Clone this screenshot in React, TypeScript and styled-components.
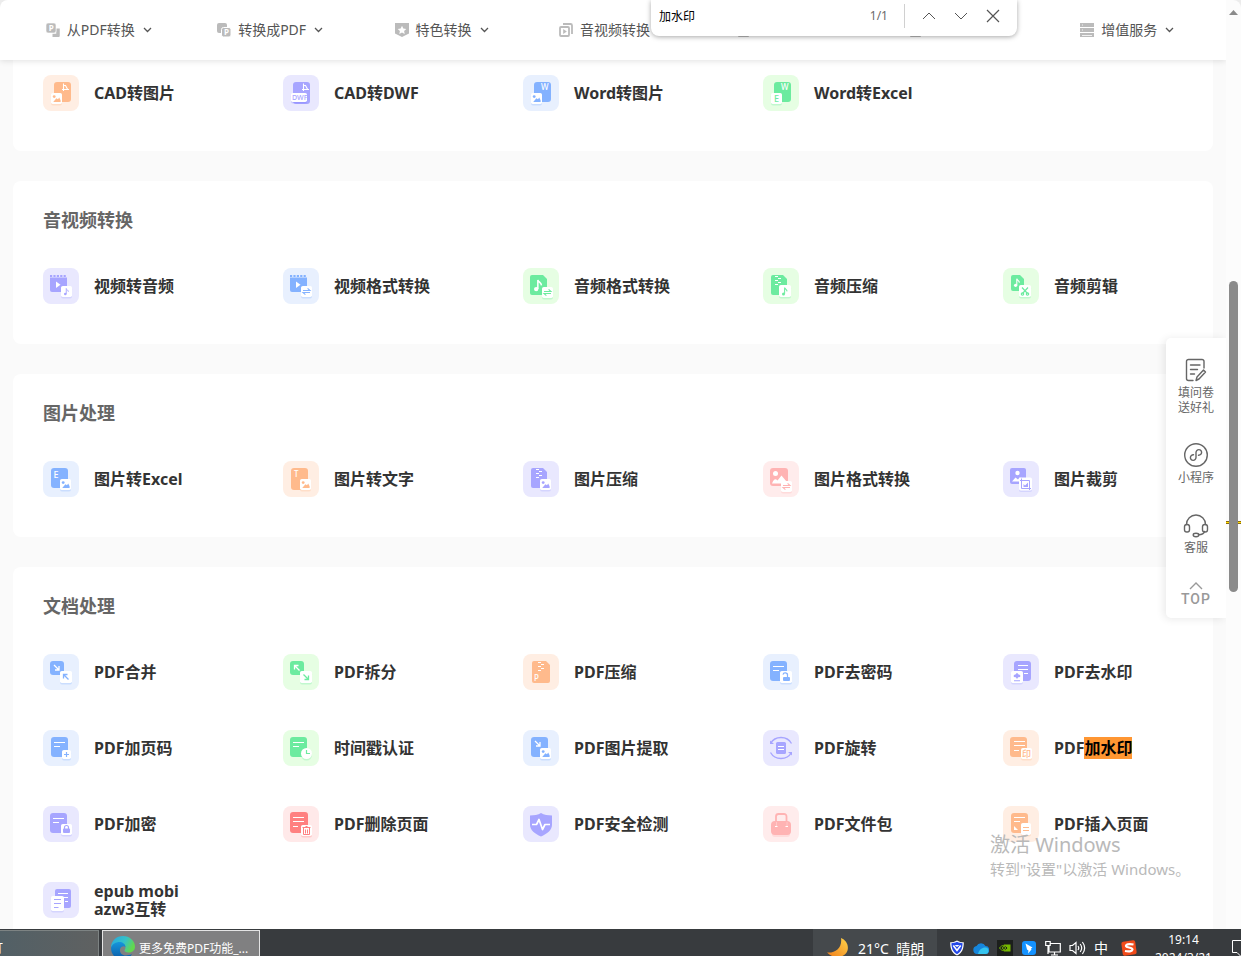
import React from "react";
import styled, { createGlobalStyle } from "styled-components";

const FONT = `"Noto Sans", "Noto Sans CJK SC", sans-serif`;

const GlobalStyle = createGlobalStyle`
  * { box-sizing: border-box; }
  body { margin: 0; background: #ececec; font-family: ${FONT}; }
  button, input { font-family: inherit; margin: 0; }
`;

/* ---------- palette ---------- */

const tones = {
  purple: { bg: "#e9e8fe", fg: "#a7a5ff" },
  blue: { bg: "#e8f0fe", fg: "#84b2ff" },
  green: { bg: "#e6fee3", fg: "#6ceb9f" },
  orange: { bg: "#ffeee3", fg: "#ffba8c" },
  pink: { bg: "#ffecec", fg: "#ffb3b3" },
  red: { bg: "#ffe9e9", fg: "#ff8080" },
};
type Tone = keyof typeof tones;

/* ---------- frame ---------- */

const Screen = styled.div`
  display: grid;
  grid-template-rows: minmax(0, 1fr) 27px;
  height: 100vh;
  overflow: hidden;
`;

const Browser = styled.div`
  position: relative;
  display: grid;
  grid-template-columns: minmax(0, 1fr) 15px;
  min-height: 0;
  border-radius: 8px 8px 0 0;
  overflow: hidden;
`;

const Page = styled.div`
  display: flex;
  flex-direction: column;
  min-height: 0;
  overflow: hidden;
  background: #fafafa;
`;

const Header = styled.header`
  position: relative;
  z-index: 2;
  flex: none;
  height: 60px;
  padding: 0 13px;
  background: #fff;
  box-shadow: 0 1px 6px rgba(0, 0, 0, 0.12);
`;

const Nav = styled.nav`
  display: flex;
  height: 100%;
`;

const NavItem = styled.button`
  flex: 1;
  display: flex;
  align-items: center;
  justify-content: center;
  padding: 0;
  border: 0;
  background: none;
  color: #555;
  font-size: 14px;
  line-height: 20px;
  white-space: nowrap;
`;

const NavLabel = styled.span`
  min-width: 56px;
  margin: 0 8px 0 7px;
`;

const Main = styled.main`
  flex: 1;
  min-height: 0;
  padding: 0 13px;
  overflow: hidden;
`;

const Card = styled.section<{ $clipped?: boolean }>`
  margin-bottom: 30px;
  padding-top: ${(p) => (p.$clipped ? 15 : 27)}px;
  background: #fff;
  border-radius: ${(p) => (p.$clipped ? "0 0 8px 8px" : "8px")};
`;

const CardTitle = styled.h2`
  margin: 0 30px 36px;
  color: #666;
  font-size: 18px;
  font-weight: 700;
  line-height: 24px;
`;

const ToolGrid = styled.div`
  display: grid;
  grid-template-columns: repeat(5, minmax(0, 1fr));
`;

const Tool = styled.a`
  display: flex;
  align-items: center;
  height: 36px;
  margin-bottom: 40px;
  padding-left: 30px;
  color: #333;
  font-size: 16px;
  font-weight: 700;
  line-height: 18px;
  text-decoration: none;
`;

const ToolLabel = styled.span`
  max-width: 120px;
  margin-left: 15px;
`;

const Hit = styled.mark`
  background: #ff9632;
  color: #000;
`;

const IconTile = styled.svg`
  flex: none;
  width: 36px;
  height: 36px;
  border-radius: 8px;
`;

/* ---------- find bar ---------- */

const FindBar = styled.form`
  position: absolute;
  z-index: 4;
  top: 0;
  right: 224px;
  display: flex;
  align-items: center;
  width: 366px;
  height: 36px;
  padding: 0 8px 4px;
  background: #fff;
  border-radius: 0 0 8px 8px;
  box-shadow: 0 1px 5px rgba(0, 0, 0, 0.35);
`;

const FindInput = styled.input`
  flex: 1;
  min-width: 0;
  padding: 0;
  border: 0;
  outline: 0;
  background: none;
  color: #000;
  font-size: 12px;
`;

const FindCount = styled.span`
  padding-right: 16px;
  border-right: 1px solid #d0d0d0;
  color: #6b6b6b;
  font-size: 12px;
  line-height: 24px;
`;

const FindButton = styled.button`
  display: grid;
  place-items: center;
  width: 32px;
  height: 24px;
  padding: 0;
  border: 0;
  background: none;
  color: #555;
`;

const FindActions = styled.div`
  display: flex;
  margin-left: 8px;
`;

/* ---------- scrollbar ---------- */

const ScrollTrack = styled.div`
  position: relative;
  background: #fcfcfc;
`;

const ScrollArrow = styled.svg`
  position: absolute;
  top: 10px;
  left: 3px;
  width: 9px;
  height: 5px;
`;

const ScrollThumb = styled.div`
  position: absolute;
  top: 281px;
  left: 3px;
  width: 9px;
  height: 311px;
  border-radius: 5px;
  background: #8b8b8b;
`;

const MatchTick = styled.div`
  position: absolute;
  top: 521px;
  left: 0;
  right: 0;
  height: 3px;
  border: solid #8a6a10;
  border-width: 1px 0;
  background: #ffdd00;
`;

/* ---------- floating panel ---------- */

const SidePanel = styled.aside`
  position: absolute;
  z-index: 3;
  top: 338px;
  right: 15px;
  display: flex;
  flex-direction: column;
  align-items: center;
  width: 60px;
  height: 280px;
  padding-top: 20px;
  background: #fff;
  border-radius: 5px 0 0 5px;
  box-shadow: -2px 1px 8px rgba(0, 0, 0, 0.09);
  clip-path: inset(-12px 0 -12px -12px);
`;

const SideButton = styled.button`
  display: flex;
  flex-direction: column;
  align-items: center;
  margin-bottom: 27px;
  padding: 0;
  border: 0;
  background: none;
  color: #666;
  font-size: 12px;
  line-height: 15px;
  white-space: pre-line;

  & svg { margin-bottom: 2px; }
`;

const TopButton = styled(SideButton)`
  margin: 0;
  color: #999;
  font-family: Roboto, sans-serif;
  font-size: 14px;
  font-weight: 500;
  letter-spacing: 1px;
`;

/* ---------- activation notice ---------- */

const Activation = styled.div`
  position: absolute;
  z-index: 5;
  right: 49px;
  bottom: 49px;
  width: 202px;
  color: #b9b9b9;
  font-size: 15px;
  line-height: 22px;
  white-space: nowrap;
  pointer-events: none;
`;

const ActivationTitle = styled.div`
  font-size: 20px;
  line-height: 26px;
`;

/* ---------- taskbar ---------- */

const Taskbar = styled.footer`
  display: flex;
  height: 27px;
  overflow: hidden;
  background: #383b3e;
  color: #fff;
`;

const TaskButton = styled.button<{ $active?: boolean }>`
  display: flex;
  align-items: center;
  flex: none;
  width: ${(p) => (p.$active ? 158 : 99)}px;
  height: 40px;
  margin: 1px 3px 0 0;
  padding: ${(p) => (p.$active ? "0 8px 4px" : "0 0 4px")};
  border: 1px solid ${(p) => (p.$active ? "#e4e4e4" : "#7d8383")};
  border-left-width: ${(p) => (p.$active ? 1 : 0)}px;
  background: ${(p) => (p.$active ? "#808081" : "linear-gradient(90deg, #526066, #5f6161)")};
  color: #fff;
  font-size: 12px;
  white-space: nowrap;

  & svg { flex: none; margin-right: 4px; }
`;

const TaskLabelEnd = styled.span`
  display: flex;
  justify-content: flex-end;
  width: 3px;
  overflow: hidden;
`;

const Weather = styled.button`
  display: flex;
  align-items: center;
  flex: none;
  width: 124px;
  height: 38px;
  margin-left: auto;
  padding: 0 0 0 13px;
  border: 0;
  background: #45494c;
  color: #fff;
  font-size: 14px;
  white-space: pre;

  & svg { margin-right: 8px; }
`;

const Tray = styled.div`
  display: flex;
  align-items: center;
  flex: none;
  gap: 8px;
  width: 211px;
  height: 38px;
  padding-left: 12px;
`;

const InputMode = styled.span`
  width: 14px;
  font-size: 14px;
  line-height: 16px;
`;

const Clock = styled.time`
  flex: none;
  width: 71px;
  font-size: 12px;
  line-height: 18px;
  text-align: center;
  padding-top: 2px;
`;

const Notice = styled.svg`
  flex: none;
  margin: 11px 0 0 13px;
`;

/* ---------- tool icon parts ---------- */

const Shape = ({ x, y, w, h, r = 3, fill }: { x: number; y: number; w: number; h: number; r?: number; fill: string }) => (
  <rect x={x} y={y} width={w} height={h} rx={r} fill={fill} />
);

const Badge = ({ x, y, w = 11, h = 11, c }: { x: number; y: number; w?: number; h?: number; c: string }) => (
  <>
    <rect x={x} y={y + 1.5} width={w} height={h} rx="2" fill={c} opacity="0.3" />
    <rect x={x} y={y} width={w} height={h} rx="1.8" fill="#fff" />
  </>
);

const PhotoBadge = ({ x, y, c }: { x: number; y: number; c: string }) => (
  <>
    <Badge x={x} y={y} c={c} />
    <circle cx={x + 3.2} cy={y + 3.6} r="1.4" fill={c} />
    <path d={`M${x + 2.2} ${y + 9} l3.2-3.8 1.6 1 1.2-1.8 1.4 2.8 v1.8z`} fill={c} />
  </>
);

const Glyph = ({ x, y, s = 8, c = "#fff", children }: { x: number; y: number; s?: number; c?: string; children: string }) => (
  <text x={x} y={y} fontSize={s} fill={c} fontFamily={FONT} fontWeight="500">{children}</text>
);

const CadMark = () => (
  <path d="M20.500 8.500V16M19 14.500h7M20.500 10.500h2l2.200 4" stroke="#fff" strokeWidth="1.100" fill="none" />
);

const Lines = ({ x, y, n = 2, c = "#fff" }: { x: number; y: number; n?: number; c?: string }) => (
  <path
    d={`M${x} ${y}h11M${x} ${y + 4}h${n === 3 ? 11 : 6}${n === 3 ? `M${x} ${y + 9}h5` : ""}`}
    stroke={c}
    strokeWidth="1.2"
    fill="none"
  />
);

const Zipper = ({ x, y }: { x: number; y: number }) => (
  <path d={`M${x} ${y + 1.5}h3M${x + 3} ${y + 3.5}h3M${x} ${y + 5.5}h3M${x + 3} ${y + 7.5}h3M${x} ${y + 9.5}h3`} stroke="#fff" strokeWidth="1.1" fill="none" />
);

const Note = ({ x, y, s = 1, c = "#fff" }: { x: number; y: number; s?: number; c?: string }) => (
  <g transform={`translate(${x} ${y}) scale(${s})`}>
    <circle cx="2" cy="9.2" r="2" fill={c} />
    <path d="M3.5 9V.8C4 3 6.5 3 6.8 5.8" stroke={c} strokeWidth="1.4" fill="none" />
  </g>
);

const Swap = ({ x, y, c }: { x: number; y: number; c: string }) => (
  <path d={`M${x + 2} ${y + 4.5}h7l-2.4-2.2M${x + 9} ${y + 6.5}h-7l2.4 2.2`} stroke={c} strokeWidth="1.1" fill="none" />
);

const Arrow = ({ x, y, c, up }: { x: number; y: number; c: string; up?: boolean }) => (
  <path
    d={up ? `M${x + 5.5} ${y + 5.5}L${x + 1} ${y + 1}M${x + 0.5} ${y + 4.5}v-4h4` : `M${x} ${y}l4.5 4.5M${x + 5} ${y + 1}v4h-4`}
    stroke={c}
    strokeWidth="1.3"
    fill="none"
  />
);

const CutPage = ({ x, w, h, c }: { x: number; w: number; h: number; c: string }) => (
  <path d={`M${x + 2} 7h${w - 6}l4 4v${h - 6}a2 2 0 0 1-2 2h${-(w - 4)}a2 2 0 0 1-2-2V9a2 2 0 0 1 2-2z`} fill={c} />
);

const Film = ({ c }: { c: string }) => (
  <>
    <path d="M7 9.500h17v12.500a2 2 0 0 1-2 2H9a2 2 0 0 1-2-2z" fill={c} />
    <path d="M7 8h17" stroke={c} strokeWidth="2" strokeDasharray="2.200 1.200" />
    <path d="M13 13.500v6.500l4.500-3.250z" fill="#fff" />
  </>
);

type Draw = (c: string) => React.ReactNode;

const art: Record<string, Draw> = {
  cadPhoto: (c) => <><Shape x={11} y={7} w={17} h={20} fill={c} /><CadMark /><PhotoBadge x={8} y={18} c={c} /></>,
  cadDwf: (c) => (
    <><Shape x={10} y={7} w={17} h={22} fill={c} /><CadMark /><Badge x={8} y={18} w={16} h={9} c="#7774ff" /><Glyph x={9} y={25} s={7} c={c}>DWF</Glyph></>
  ),
  wordPhoto: (c) => <><Shape x={11} y={7} w={17} h={20} fill={c} /><Glyph x={18} y={15}>W</Glyph><PhotoBadge x={8} y={18} c={c} /></>,
  wordExcel: (c) => <><Shape x={11} y={7} w={17} h={20} fill={c} /><Glyph x={18} y={15}>W</Glyph><Badge x={8} y={18} c={c} /><Glyph x={11} y={27} s={9} c={c}>E</Glyph></>,
  videoAudio: (c) => <><Film c={c} /><Badge x={18} y={18} c={c} /><Note x={21} y={20} s={0.65} c={c} /></>,
  videoSwap: (c) => <><Film c={c} /><Badge x={18} y={18} c={c} /><Swap x={18} y={18} c={c} /></>,
  audioSwap: (c) => <><CutPage x={7} w={17} h={20} c={c} /><Note x={11} y={11} s={1.1} /><Badge x={19} y={19} c={c} /><Swap x={19} y={19} c={c} /></>,
  audioZip: (c) => <><CutPage x={8} w={16} h={20} c={c} /><Zipper x={12} y={7} /><Badge x={16} y={17} w={12} h={12} c={c} /><Note x={19} y={19} s={0.75} c={c} /></>,
  audioCut: (c) => (
    <><CutPage x={8} w={13} h={16} c={c} /><Note x={11} y={10} s={0.8} /><Badge x={16} y={17} w={12} h={12} c={c} />
      <g stroke={c} fill="none" strokeWidth="1.2"><path d="M19 19.500l5.500 6M25 19.500l-5.500 6" /><circle cx="19.500" cy="26" r="1.200" /><circle cx="24.500" cy="26" r="1.200" /></g></>
  ),
  photoExcel: (c) => <><Shape x={8} y={7} w={17} h={20} fill={c} /><Glyph x={10.5} y={17} s={9}>E</Glyph><PhotoBadge x={17} y={18} c={c} /></>,
  photoText: (c) => <><Shape x={8} y={7} w={17} h={22} fill={c} /><Glyph x={11} y={16}>T</Glyph><PhotoBadge x={17} y={18} c={c} /></>,
  photoZip: (c) => <><CutPage x={8} w={16} h={20} c={c} /><Zipper x={13} y={7} /><PhotoBadge x={17} y={18} c={c} /></>,
  photoSwap: (c) => (
    <><Shape x={7} y={7} w={18} h={18} fill={c} /><circle cx="12.500" cy="12.500" r="2.500" fill="#fff" /><path d="M9 22.500c2-5 3.500-5 5.500-3l4-5 5 6v2z" fill="#fff" />
      <Badge x={18} y={20} c={c} /><Swap x={18} y={20} c={c} /></>
  ),
  photoCrop: (c) => (
    <><Shape x={7} y={7} w={16} h={16} r={2} fill={c} /><circle cx="14.500" cy="12" r="2.200" fill="#fff" /><path d="M9 20.500l3.500-4 2.500 2 2-2.500 3 4.500z" fill="#fff" />
      <Badge x={16} y={16.500} w={13} h={13} c={c} /><path d="M18.500 17.500v10H28M17 19.500h9.500v9.500" stroke={c} strokeWidth="1" fill="none" /><path d="M20.500 26v-3l1.500 1.500 3-3V26z" fill={c} /></>
  ),
  merge: (c) => <><Shape x={7} y={7} w={14} h={14} fill={c} /><Arrow x={11} y={11} c="#fff" /><Badge x={17} y={17} w={12} h={12} c={c} /><Arrow x={20} y={20} c={c} up /></>,
  split: (c) => <><Shape x={7} y={7} w={14} h={14} fill={c} /><Arrow x={11} y={11} c="#fff" up /><Badge x={17} y={17} w={12} h={12} c={c} /><Arrow x={20.5} y={20.5} c={c} /></>,
  pdfZip: (c) => <><CutPage x={9} w={18} h={22} c={c} /><Zipper x={15} y={7} /><Glyph x={11} y={27} s={8}>P</Glyph></>,
  unlock: (c) => (
    <><Shape x={7} y={7} w={17} h={20} fill={c} /><Lines x={10} y={12.5} /><Badge x={17} y={17} w={12} h={12} c={c} />
      <rect x="20" y="23" width="7" height="4" rx="1" fill={c} /><path d="M24.500 23v-1.500a2.200 2.200 0 0 0-4.500-.8" stroke={c} strokeWidth="1.200" fill="none" /></>
  ),
  unmark: (c) => (
    <><Shape x={11} y={7} w={17} h={20} fill={c} /><path d="M15 11.500h10M15 15.500h10M21 19.500h4" stroke="#fff" strokeWidth="1.200" /><Badge x={8} y={17} w={12} h={12} c={c} />
      <path d="M14 18.800l1.600 1.600 1.600.7v1.800l-2 .4L14 25l-1.200-1.700-2-.4v-1.800l1.600-.7zM11 26.300h6v1h-6z" fill={c} /></>
  ),
  addPage: (c) => <><Shape x={8} y={7} w={17} h={20} fill={c} /><Lines x={11} y={12.5} /><Badge x={19} y={20} w={9} h={9} c={c} /><path d="M23.500 22v5M21 24.500h5" stroke={c} strokeWidth="1.200" /></>,
  clock: (c) => (
    <><Shape x={7} y={7} w={17} h={20} fill={c} /><Lines x={10} y={12.5} /><circle cx="23.500" cy="25" r="5.500" fill={c} opacity=".3" /><circle cx="23.500" cy="23.500" r="5.500" fill="#fff" />
      <path d="M23.500 20v3.500h3.500" stroke={c} strokeWidth="1.200" fill="none" /></>
  ),
  extract: (c) => <><Shape x={8} y={7} w={17} h={20} fill={c} /><Arrow x={12} y={11} c="#fff" /><PhotoBadge x={17} y={18} c={c} /></>,
  rotate: (c) => (
    <><Shape x={13} y={12} w={10} h={12} r={1.5} fill={c} /><path d="M15 16.500h6M15 19.500h6" stroke="#fff" strokeWidth="1.100" />
      <path d="M28.500 13.500C24 5.500 12 5.500 7.500 13.500M7.500 22.500c4.500 8 16.500 8 21 0" stroke={c} strokeWidth="1.300" fill="none" /><path d="M7 10.500v3.500h4zM29 25.500V22h-4z" fill={c} /></>
  ),
  mark: (c) => <><Shape x={7} y={7} w={17} h={20} fill={c} /><Lines x={11} y={11.5} n={3} /><Badge x={18} y={18} c={c} /><Glyph x={19} y={27} s={9} c={c}>印</Glyph></>,
  lock: (c) => (
    <><Shape x={7} y={7} w={17} h={20} fill={c} /><Lines x={10} y={12.5} /><Badge x={18} y={18} c={c} />
      <rect x="20" y="22.500" width="7" height="4.500" rx="1" fill={c} /><path d="M21.500 23v-1.500a2 2 0 0 1 4 0V23" stroke={c} strokeWidth="1.200" fill="none" /></>
  ),
  trash: (c) => (
    <><Shape x={7} y={6} w={18} h={21} fill={c} /><Lines x={10} y={11.5} n={3} /><Badge x={18} y={19} c={c} />
      <path d="M19.500 21.500h8M20.500 21.500v7h6v-7M22.500 23.500v4M24.500 23.500v4M22.500 20.500h2" stroke={c} strokeWidth="1" fill="none" /></>
  ),
  shield: (c) => (
    <><path d="M18 7c3 1.800 7 2.500 11 2.500V19c0 5-5 9-11 11.500C12 28 7 24 7 19V9.500C11 9.500 15 8.800 18 7z" fill={c} />
      <path d="M9 18.500h4.500l2.500-5 3.500 10 2.500-5h5" stroke="#fff" strokeWidth="1.700" fill="none" strokeLinejoin="round" /></>
  ),
  bag: (c) => (
    <><rect x="9" y="17" width="18" height="14" rx="3" fill={c} opacity=".3" /><path d="M13 17v-6.500a2.500 2.500 0 0 1 2.500-2.500h5.500a2.500 2.500 0 0 1 2.500 2.500V17" stroke={c} strokeWidth="1.800" fill="none" /><Shape x={8} y={15} w={20} h={14} r={4} fill={c} />
      <path d="M12 20.500h2.500M22.500 20.500h2.500" stroke="#fff" strokeWidth="1" /><path d="M13.500 16v4M24 16v4" stroke="#fff" strokeWidth=".5" opacity=".6" /></>
  ),
  insert: (c) => (
    <><Shape x={8} y={7} w={17} h={20} fill={c} /><Lines x={11} y={11.5} /><path d="M11 20v4h4z" fill="#fff" /><Badge x={18} y={17} w={10} h={12} c={c} />
      <path d="M20 21.500h6M20 24.500h6" stroke={c} strokeWidth="1.100" /></>
  ),
  epub: (c) => (
    <><Shape x={12} y={7} w={16} h={19} r={2} fill={c} /><path d="M15 11.500h10M15 15.500h10M22 19.500h3" stroke="#fff" strokeWidth="1.200" /><Badge x={8} y={14} w={13} h={15} c={c} />
      <path d="M11 17.500h7M11 21.500h7M11 25.500h4.500" stroke={c} strokeWidth="1.100" /></>
  ),
};

/* ---------- data ---------- */

type ToolSpec = [string, Tone, string, string?];

const sections: { title?: string; tools: ToolSpec[] }[] = [
  {
    tools: [
      ["CAD转图片", "orange", "cadPhoto"],
      ["CAD转DWF", "purple", "cadDwf"],
      ["Word转图片", "blue", "wordPhoto"],
      ["Word转Excel", "green", "wordExcel"],
    ],
  },
  {
    title: "音视频转换",
    tools: [
      ["视频转音频", "purple", "videoAudio"],
      ["视频格式转换", "blue", "videoSwap"],
      ["音频格式转换", "green", "audioSwap"],
      ["音频压缩", "green", "audioZip"],
      ["音频剪辑", "green", "audioCut"],
    ],
  },
  {
    title: "图片处理",
    tools: [
      ["图片转Excel", "blue", "photoExcel"],
      ["图片转文字", "orange", "photoText"],
      ["图片压缩", "purple", "photoZip"],
      ["图片格式转换", "pink", "photoSwap"],
      ["图片裁剪", "purple", "photoCrop"],
    ],
  },
  {
    title: "文档处理",
    tools: [
      ["PDF合并", "blue", "merge"],
      ["PDF拆分", "green", "split"],
      ["PDF压缩", "orange", "pdfZip"],
      ["PDF去密码", "blue", "unlock"],
      ["PDF去水印", "purple", "unmark"],
      ["PDF加页码", "blue", "addPage"],
      ["时间戳认证", "green", "clock"],
      ["PDF图片提取", "blue", "extract"],
      ["PDF旋转", "purple", "rotate"],
      ["PDF", "orange", "mark", "加水印"],
      ["PDF加密", "purple", "lock"],
      ["PDF删除页面", "red", "trash"],
      ["PDF安全检测", "purple", "shield"],
      ["PDF文件包", "pink", "bag"],
      ["PDF插入页面", "orange", "insert"],
      ["epub mobi azw3互转", "purple", "epub"],
    ],
  },
];

const g = "#bbb";
const navIcons: Record<string, React.ReactNode> = {
  from: (
    <><path d="M12 5.500v7H6.500" stroke={g} strokeWidth="3.500" fill="none" strokeLinejoin="round" /><rect width="10" height="10" rx="2" fill={g} stroke="#fff" strokeWidth=".6" />
      <text x="2.700" y="8" fontSize="8" fill="#fff" fontFamily={FONT} fontWeight="700">P</text></>
  ),
  to: (
    <><rect width="10" height="10" rx="2" fill={g} /><rect x="4.500" y="4.500" width="9.500" height="9.500" rx="2" fill={g} stroke="#fff" />
      <text x="7" y="12.300" fontSize="8" fill="#fff" fontFamily={FONT} fontWeight="700">P</text></>
  ),
  star: (
    <><path d="M0 0h14v10.500L7 14 0 10.500z" fill={g} /><path d="M7 2.800l1.300 2.700 3 .4-2.200 2 .6 3L7 9.400l-2.700 1.500.6-3-2.200-2 3-.4z" fill="#fff" /></>
  ),
  media: (
    <><path d="M4 1h7.500a1.500 1.500 0 0 1 1.500 1.500v8.500" stroke={g} strokeWidth="1.800" fill="none" /><rect x="1" y="4" width="9" height="9" rx="1" stroke={g} strokeWidth="1.800" fill="none" /><path d="M4.200 6v5l3.600-2.500z" fill={g} /></>
  ),
  page: <rect x="1" width="11" height="14" rx="1" fill={g} />,
  rows: (
    <><path d="M0 0h14v4H0zM0 5h14v4H0zM0 10h14v4H0z" fill={g} /><path d="M2 2h1M2 7h1M2 12.500h10" stroke="#fff" strokeWidth=".8" /></>
  ),
};

const nav: [string, string][] = [
  ["from", "从PDF转换"],
  ["to", "转换成PDF"],
  ["star", "特色转换"],
  ["media", "音视频转换"],
  ["page", ""],
  ["page", ""],
  ["rows", "增值服务"],
];

export default function App() {
  return (
    <>
      <GlobalStyle />
      <Screen>
        <Browser>
          <Page>
            <Header>
              <Nav>
                {nav.map(([icon, label], i) => (
                  <NavItem key={i} type="button">
                    <svg width="14" height="14" viewBox="0 0 14 14" aria-hidden>{navIcons[icon]}</svg>
                    <NavLabel>{label}</NavLabel>
                    <svg width="9" height="6" viewBox="0 0 9 6" fill="none" stroke="#555" strokeWidth="1.300" aria-hidden><path d="M1 1l3.500 3.500L8 1" /></svg>
                  </NavItem>
                ))}
              </Nav>
            </Header>
            <Main>
              {sections.map((s, i) => (
                <Card key={i} $clipped={!s.title}>
                  {s.title && <CardTitle>{s.title}</CardTitle>}
                  <ToolGrid>
                    {s.tools.map(([label, tone, icon, hit]) => (
                      <Tool key={icon} href="#">
                        <IconTile viewBox="0 0 36 36" aria-hidden>
                          <rect width="36" height="36" fill={tones[tone].bg} />
                          {art[icon](tones[tone].fg)}
                        </IconTile>
                        <ToolLabel>{label}{hit && <Hit>{hit}</Hit>}</ToolLabel>
                      </Tool>
                    ))}
                  </ToolGrid>
                </Card>
              ))}
            </Main>
          </Page>
          <ScrollTrack>
            <ScrollArrow viewBox="0 0 9 5"><path d="M4.500 0L9 5H0z" fill="#8b8b8b" /></ScrollArrow>
            <MatchTick />
            <ScrollThumb />
          </ScrollTrack>

          <FindBar>
            <FindInput aria-label="查找" defaultValue="加水印" />
            <FindCount>1/1</FindCount>
            <FindActions>
              <FindButton type="button" aria-label="上一个">
                <svg width="14" height="8" viewBox="0 0 14 8" fill="none" stroke="currentColor"><path d="M1 7l6-6 6 6" /></svg>
              </FindButton>
              <FindButton type="button" aria-label="下一个">
                <svg width="14" height="8" viewBox="0 0 14 8" fill="none" stroke="currentColor"><path d="M1 1l6 6 6-6" /></svg>
              </FindButton>
              <FindButton type="button" aria-label="关闭">
                <svg width="14" height="14" viewBox="0 0 14 14" fill="none" stroke="currentColor" strokeWidth="1.200"><path d="M1 1l12 12M13 1L1 13" /></svg>
              </FindButton>
            </FindActions>
          </FindBar>

          <SidePanel>
            <SideButton type="button">
              <svg width="24" height="25" viewBox="0 0 24 25" fill="none" stroke="#666" strokeWidth="1.400" strokeLinecap="round" strokeLinejoin="round">
                <path d="M20 10V3.500a2 2 0 0 0-2-2H4.500a2 2 0 0 0-2 2v17a2 2 0 0 0 2 2H9M6.500 7h9.500M6.500 11.500h7M6.500 16h4M12 22.500l1-3.500 6.500-7 2 2-6.500 7z" />
              </svg>
              {"填问卷\n送好礼"}
            </SideButton>
            <SideButton type="button">
              <svg width="26" height="26" viewBox="0 0 26 26" fill="none" stroke="#666" strokeWidth="1.400" strokeLinecap="round">
                <circle cx="13" cy="13" r="11.300" />
                <path d="M10.500 12.800a2.800 2.800 0 1 0 2.500 2.800v-5.200a2.800 2.800 0 1 1 2.500 2.800" />
              </svg>
              小程序
            </SideButton>
            <SideButton type="button">
              <svg width="26" height="26" viewBox="0 0 26 26" fill="none" stroke="#666" strokeWidth="1.400" strokeLinecap="round">
                <path d="M3.500 12.500a9.500 9.500 0 0 1 19 0M21.500 19.500c-.5 2-3 3.200-6 3.300" />
                <rect x="1.500" y="12.500" width="5" height="7.500" rx="2.300" /><rect x="19.500" y="12.500" width="5" height="7.500" rx="2.300" />
                <ellipse cx="13" cy="23" rx="2.800" ry="1.700" />
              </svg>
              客服
            </SideButton>
            <TopButton type="button">
              <svg width="14" height="8" viewBox="0 0 14 8" fill="none" stroke="#999" strokeWidth="1.400"><path d="M1 7l6-6 6 6" /></svg>
              TOP
            </TopButton>
          </SidePanel>

          <Activation>
            <ActivationTitle>激活 Windows</ActivationTitle>
            转到"设置"以激活 Windows。
          </Activation>
        </Browser>

        <Taskbar>
          <TaskButton type="button"><TaskLabelEnd>打</TaskLabelEnd></TaskButton>
          <TaskButton type="button" $active>
            <svg width="24" height="24" viewBox="0 0 24 24" aria-hidden>
              <defs>
                <linearGradient id="edgeTop" x1="0" y1="0" x2="1" y2=".4"><stop offset="0" stopColor="#27a8e0" /><stop offset=".6" stopColor="#35c1c8" /><stop offset="1" stopColor="#62d84e" /></linearGradient>
                <linearGradient id="edgeLow" x1="0" y1="0" x2="0" y2="1"><stop offset="0" stopColor="#1595dc" /><stop offset="1" stopColor="#0c59a4" /></linearGradient>
              </defs>
              <path d="M0 12C0 4.500 5.500 0 12 0s12 5 12 10.500c0 4-3 6-6.500 6-3 0-4-1.200-4-2 0-.8 1-1.200 1-3C14.500 9 12 7 8.500 7 4 7 1 9 0 12z" fill="url(#edgeTop)" />
              <path d="M0 12c1-4 5-6 8.500-6 3 0 6 2 6 5-1-1.500-5-1-5.500 2.500C8.500 18 13 21.500 21 18c-2 4-5.500 6-9 6C5.500 24 0 19 0 12z" fill="url(#edgeLow)" />
            </svg>
            更多免费PDF功能_...
          </TaskButton>

          <Weather type="button">
            <svg width="24" height="24" viewBox="0 0 24 24" aria-hidden>
              <defs><linearGradient id="moon" x1="0" y1="1" x2="1" y2="0"><stop offset="0" stopColor="#f07d1a" /><stop offset="1" stopColor="#ffd34a" /></linearGradient></defs>
              <path d="M15 2c5 2 8 7 6.500 12.500C19.500 21.500 8 24 1 16.500 9 17.500 16.500 12 15 2z" fill="url(#moon)" />
            </svg>
            {"21°C  晴朗"}
          </Weather>
          <Tray>
            <svg width="16" height="16" viewBox="0 0 16 16" aria-hidden><path d="M8 .5c2 1.300 4.500 1.800 6.800 1.800 0 6-1.300 10.700-6.800 13.200C2.500 13 1.200 8.300 1.200 2.300 3.500 2.300 6 1.800 8 .5z" fill="#fff" /><path d="M8 1.800c2 1 3.800 1.400 5.600 1.500-.2 5-1.400 8.700-5.600 10.900-4.200-2.200-5.400-5.900-5.600-10.900C4.200 3.200 6 2.800 8 1.800z" fill="#2448e8" /><path d="M4.300 5.500L8 10.500l3.700-5" fill="none" stroke="#fff" strokeWidth="1.600" /><path d="M5.500 5L8 7l2.500-2z" fill="#fff" /></svg>
            <svg width="16" height="16" viewBox="0 0 16 16" aria-hidden><path d="M4 14a4 4 0 0 1-.5-7.900A5 5 0 0 1 12.500 6 4 4 0 0 1 12 14z" fill="#1686dc" /><path d="M5 14c1-5 5-7 8-6.500A3.300 3.300 0 0 1 12.500 14z" fill="#35c4ee" /></svg>
            <svg width="16" height="16" viewBox="0 0 16 16" aria-hidden><rect width="16" height="16" fill="#1c1f1c" /><path d="M7 4.500h6.500v7H7z" fill="#76b900" /><path d="M2.500 8C5 4.500 8.500 4.500 11 8c-2.500 3.500-6 3.500-8.500 0z" fill="#1c1f1c" stroke="#76b900" /><circle cx="7" cy="8" r="1.500" fill="none" stroke="#76b900" /></svg>
            <svg width="16" height="16" viewBox="0 0 16 16" aria-hidden><rect x="1" y="1" width="14" height="14" rx="3" fill="#1492ff" /><path d="M4.500 3.500l7 4-1.500 1 .5 1-3.500 4 .5-3-1.500-1z" fill="#fff" /></svg>
            <svg width="16" height="16" viewBox="0 0 16 16" fill="none" stroke="#fff" strokeWidth="1.200" aria-hidden><path d="M5.500 3.500H15.300V12H4V6M9.500 12v3M6 15h7M.7 1.500h4.500v4H.7zM3 5.500V14" /></svg>
            <svg width="17" height="16" viewBox="0 0 17 16" fill="none" stroke="#fff" strokeWidth="1.200" aria-hidden><path d="M1 5.500h2.500L7 2.500v11L3.500 10.500H1zM9 6q1.500 2 0 4M11.200 4q3 4 0 8M13.400 2q4.500 6 0 12" /></svg>
            <InputMode>中</InputMode>
            <svg width="24" height="16" viewBox="0 0 24 16" aria-hidden><rect x="6" y="1" width="14" height="14" rx="2" fill="#f04a1a" transform="rotate(-8 13 8)" /><path d="M17.500 4.500c-5-1-8 0-7.500 1.800.4 1.500 6.800 1 6.500 3.200-.3 2-4 2.300-7.500 1.500" stroke="#fff" strokeWidth="2.200" fill="none" /></svg>
          </Tray>
          <Clock>19:14<br />2024/3/21</Clock>
          <Notice width="9" height="18" viewBox="0 0 9 18" fill="none" stroke="#fff" aria-hidden><path d="M9 .5H.5v12H5l4 4" /></Notice>
        </Taskbar>
      </Screen>
    </>
  );
}
